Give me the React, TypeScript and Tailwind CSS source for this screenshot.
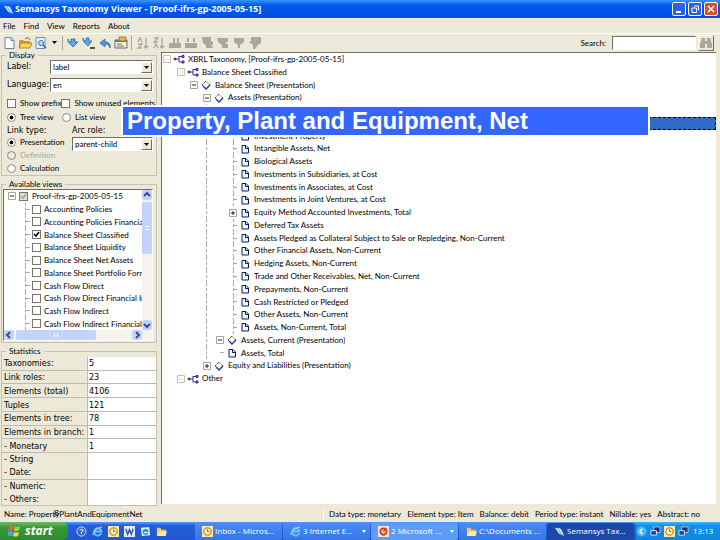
import { useState } from 'react';
import type { ReactNode } from 'react';

type NodeKind = 'network' | 'diamond' | 'page';

interface TreeNode {
  level: number;
  kind: NodeKind;
  label: string;
  toggle?: '-' | '+';
  selected?: boolean;
}

// the two rows under the callout carry no label of their own
const tree: TreeNode[] = [
  { level: 0, kind: 'network', label: 'XBRL Taxonomy, [Proof-ifrs-gp-2005-05-15]', toggle: '-' },
  { level: 1, kind: 'network', label: 'Balance Sheet Classified', toggle: '-' },
  { level: 2, kind: 'diamond', label: 'Balance Sheet (Presentation)', toggle: '-' },
  { level: 3, kind: 'diamond', label: 'Assets (Presentation)', toggle: '-' },
  { level: 4, kind: 'diamond', label: '', toggle: '-' },
  { level: 5, kind: 'page', label: '', selected: true },
  { level: 5, kind: 'page', label: 'Investment Property' },
  { level: 5, kind: 'page', label: 'Intangible Assets, Net' },
  { level: 5, kind: 'page', label: 'Biological Assets' },
  { level: 5, kind: 'page', label: 'Investments in Subsidiaries, at Cost' },
  { level: 5, kind: 'page', label: 'Investments in Associates, at Cost' },
  { level: 5, kind: 'page', label: 'Investments in Joint Ventures, at Cost' },
  { level: 5, kind: 'page', label: 'Equity Method Accounted Investments, Total', toggle: '+' },
  { level: 5, kind: 'page', label: 'Deferred Tax Assets' },
  { level: 5, kind: 'page', label: 'Assets Pledged as Collateral Subject to Sale or Repledging, Non-Current' },
  { level: 5, kind: 'page', label: 'Other Financial Assets, Non-Current' },
  { level: 5, kind: 'page', label: 'Hedging Assets, Non-Current' },
  { level: 5, kind: 'page', label: 'Trade and Other Receivables, Net, Non-Current' },
  { level: 5, kind: 'page', label: 'Prepayments, Non-Current' },
  { level: 5, kind: 'page', label: 'Cash Restricted or Pledged' },
  { level: 5, kind: 'page', label: 'Other Assets, Non-Current' },
  { level: 5, kind: 'page', label: 'Assets, Non-Current, Total' },
  { level: 4, kind: 'diamond', label: 'Assets, Current (Presentation)', toggle: '-' },
  { level: 4, kind: 'page', label: 'Assets, Total' },
  { level: 3, kind: 'diamond', label: 'Equity and Liabilities (Presentation)', toggle: '+' },
  { level: 1, kind: 'network', label: 'Other', toggle: '-' },
];

const views = [
  'Accounting Policies',
  'Accounting Policies Financia',
  'Balance Sheet Classified',
  'Balance Sheet Liquidity',
  'Balance Sheet Net Assets',
  'Balance Sheet Portfolio Form',
  'Cash Flow Direct',
  'Cash Flow Direct Financial In',
  'Cash Flow Indirect',
  'Cash Flow Indirect Financial I',
];

const stats = [
  { label: 'Taxonomies:', value: '5', line: true },
  { label: 'Link roles:', value: '23', line: true },
  { label: 'Elements (total)', value: '4106', line: true },
  { label: 'Tuples', value: '121', line: true },
  { label: 'Elements in tree:', value: '78', line: true },
  { label: 'Elements in branch:', value: '1', line: true },
  { label: '- Monetary', value: '1', line: true },
  { label: '- String', value: '', line: false },
  { label: '- Date:', value: '', line: true },
  { label: '- Numeric:', value: '', line: false },
  { label: '- Others:', value: '', line: false },
];

function NodeIcon({ kind }: { kind: NodeKind }) {
  if (kind === 'network') {
    return (
      <svg viewBox="0 0 12 10" className="h-[10px] w-3 shrink-0" fill="none" stroke="#3a2a8c">
        <path d="M1 5h5M6 2v6M6 2.500h3M6 8h3" />
        <path d="M9 1.500h2v2H9zM9 7h2v2H9z" fill="#8d7fd0" />
        <circle cx="2" cy="5" r="1" fill="#3a2a8c" />
      </svg>
    );
  }
  if (kind === 'diamond') {
    return (
      <svg viewBox="0 0 12 10" className="h-[10px] w-3 shrink-0">
        <path d="M6 1l4 4-4 4-4-4z" fill="#fffde6" stroke="#27468f" strokeDasharray="3 1" />
        <path d="M6 1l3 3" stroke="#c9b437" />
        <path d="M3 6l3 3 4-4" fill="none" stroke="#27468f" strokeWidth="1.500" />
      </svg>
    );
  }
  return (
    <svg viewBox="0 0 12 10" className="h-[10px] w-3 shrink-0">
      <path d="M3 1.500h4l2.500 2.500v5H3z" fill="#eef6ff" stroke="#0c1c58" />
      <path d="M6.500 1.500v3h3" fill="none" stroke="#0c1c58" />
    </svg>
  );
}

function Toggle({ sign, faint }: { sign: '-' | '+'; faint?: boolean }) {
  return (
    <svg viewBox="0 0 8 8" className="size-2 shrink-0" fill="none">
      <path d="M.5.5h7v7h-7z" fill="#fff" stroke={faint ? '#c4c0b0' : '#a8a496'} />
      <path d={sign === '+' ? 'M2 4h4M4 2v4' : 'M2 4h4'} stroke={faint ? '#d8d5c8' : '#222'} />
    </svg>
  );
}

const indent = ['w-px', 'w-[15px]', 'w-[28px]', 'w-[41px]'];

function TreeRow({ node }: { node: TreeNode }) {
  return (
    <li className="flex min-h-0 flex-1 items-center">
      {node.level < 4 && <span className={`${indent[node.level]} shrink-0`} />}
      {node.level >= 4 && (
        <>
          <span className="w-11 shrink-0" />
          <span
            className={`shrink-0 self-stretch border-l border-dashed border-[#aaa] ${node.level === 4 ? 'w-[10px]' : 'w-[23px]'}`}
          />
        </>
      )}
      {node.toggle ? (
        <Toggle sign={node.toggle} faint={node.level < 2} />
      ) : (
        <span
          className={`ml-1 flex w-1 shrink-0 items-center self-stretch border-dashed border-[#aaa] ${node.level === 5 ? 'border-l' : ''}`}
        >
          <span className="w-full border-t border-dashed border-[#aaa]" />
        </span>
      )}
      <span className="ml-[2px] flex shrink-0">
        <NodeIcon kind={node.kind} />
      </span>
      <span
        className={`ml-[2px] truncate self-stretch pl-px leading-[13px] ${node.selected ? 'flex-1 border border-dashed border-black bg-[#316ac5] text-white' : ''}`}
      >
        {node.label}
      </span>
    </li>
  );
}

function Check({ id, checked, muted }: { id: string; checked?: boolean; muted?: boolean }) {
  return (
    <span className="inline-grid shrink-0">
      <input
        id={id}
        type="checkbox"
        defaultChecked={checked}
        className={`peer col-start-1 row-start-1 size-[9px] appearance-none border border-[#77756b] ${muted ? 'bg-[#e4e0d4]' : 'bg-white'}`}
      />
      <svg
        viewBox="0 0 9 9"
        className={`pointer-events-none invisible col-start-1 row-start-1 size-[9px] peer-checked:visible ${muted ? 'text-[#a5a193]' : 'text-black'}`}
      >
        <path d="M2 4l2 2 3-4" fill="none" stroke="currentColor" strokeWidth="1.500" />
      </svg>
    </span>
  );
}

function Radio({ name, label, checked, disabled }: { name: string; label: string; checked?: boolean; disabled?: boolean }) {
  return (
    <label className={`flex h-[10px] items-center gap-1 ${disabled ? 'text-[#aca899]' : ''}`}>
      <input
        type="radio"
        name={name}
        defaultChecked={checked}
        disabled={disabled}
        className="size-[9px] shrink-0 appearance-none rounded-full border border-[#8c897c] bg-white checked:bg-[radial-gradient(circle,#000_35%,#fff_45%)] disabled:bg-[#ece9d8]"
      />
      {label}
    </label>
  );
}

function Combo({ id, value }: { id: string; value: string }) {
  return (
    <span className="flex h-[14px] min-w-0 flex-1 items-center border border-t-[#716f64] border-r-white border-b-white border-l-[#716f64] bg-white">
      <select id={id} className="h-3 min-w-0 flex-1 appearance-none bg-white pl-[2px] leading-3 outline-none">
        <option>{value}</option>
      </select>
      <span className="flex h-[11px] w-[11px] items-center justify-center border border-t-white border-r-[#716f64] border-b-[#716f64] border-l-white bg-[#ece9d8]">
        <svg viewBox="0 0 5 3" className="h-[3px] w-[5px]">
          <path d="M0 0h5L2.500 3z" />
        </svg>
      </span>
    </span>
  );
}

function Group({ title, children }: { title: string; children: ReactNode }) {
  return (
    <fieldset className="min-w-0 border border-[#c5c2b4]">
      <legend className="ml-1 px-[3px] leading-2">{title}</legend>
      {children}
    </fieldset>
  );
}

function ScrollButton({ label, d }: { label: string; d: string }) {
  return (
    <button aria-label={label} className="flex size-[10px] shrink-0 items-center justify-center rounded-xs bg-[#c3d3fd]">
      <svg viewBox="0 0 8 8" className="size-2" fill="none" stroke="#32508e" strokeWidth="2">
        <path d={d} />
      </svg>
    </button>
  );
}

function ToolButton({ label, children }: { label: string; children: ReactNode }) {
  return (
    <button aria-label={label} className="flex h-4 w-4 shrink-0 items-center justify-center">
      <svg viewBox="0 0 14 14" className="size-[14px]" fill="none">
        {children}
      </svg>
    </button>
  );
}

function Toolbar() {
  return (
    <div className="flex h-[18px] items-center border-t border-white pr-[6px] pl-px">
      <ToolButton label="New">
        <path d="M3 1.500h6l3 3v8H3z" fill="#fff" stroke="#6b7fa8" />
        <path d="M9 1.500v3h3" stroke="#6b7fa8" />
      </ToolButton>
      <ToolButton label="Open">
        <path d="M1 4h4l1 1h6v7H1z" fill="#d79a22" />
        <path d="M3 7h11l-2 5H1z" fill="#ffd65c" stroke="#a87514" strokeWidth=".8" />
        <path d="M7 3c2-2 4-1 5 1" stroke="#555" />
      </ToolButton>
      <ToolButton label="Preview">
        <path d="M2 1.500h9v11H2z" fill="#e7f1fb" stroke="#6b8fb8" />
        <circle cx="7" cy="7" r="2.500" fill="#b6dcf5" stroke="#3c78a8" />
        <path d="M9 9l3 3" stroke="#3c6088" strokeWidth="1.500" />
      </ToolButton>
      <svg viewBox="0 0 5 3" className="mx-[3px] h-[3px] w-[5px]">
        <path d="M0 0h5L2.500 3z" />
      </svg>
      <span className="mx-[2px] h-[14px] w-px bg-[#aca899]" />
      <ToolButton label="Load">
        <path d="M2 3c0 2 1 3 3 3V3h4v3h3l-5 5-4-4C2 6 2 5 2 3z" fill="#5ba8e6" stroke="#1d5f9f" strokeWidth=".7" />
      </ToolButton>
      <ToolButton label="Load next">
        <path d="M1 2c0 2 1 3 3 3V2h3v3h3L6 10 2 6C1 5 1 4 1 2z" fill="#5ba8e6" stroke="#1d5f9f" strokeWidth=".7" />
        <path d="M8 12h5" stroke="#222" strokeWidth="1.500" />
      </ToolButton>
      <ToolButton label="Undo">
        <path d="M12 12c1-5-2-6-5-6V3L2 7l5 4V8c3 0 4 1 5 4z" fill="#4b9be0" stroke="#1d5f9f" strokeWidth=".7" />
      </ToolButton>
      <ToolButton label="Properties">
        <path d="M1 4h12v8H1z" fill="#f5efcf" stroke="#5c6a86" />
        <path d="M1 4h12v2H1z" fill="#5877b0" />
        <path d="M5 1h7v4H5z" fill="#f0b24b" stroke="#8a6222" strokeWidth=".7" />
        <path d="M3 8h5M3 10h7" stroke="#777" />
      </ToolButton>
      <span className="mx-[2px] h-[14px] w-px bg-[#aca899]" />
      <span className="w-px" />
      <ToolButton label="Sort ascending">
        <path d="M2 6l2-4 2 4M2 8h4l-4 4h4M10 2v10M8 10l2 2 2-2" stroke="#aca899" strokeWidth="1.300" />
      </ToolButton>
      <ToolButton label="Sort descending">
        <path d="M2 2h4L2 6h4M2 12l2-4 2 4M10 2v10M8 10l2 2 2-2" stroke="#aca899" strokeWidth="1.300" />
      </ToolButton>
      <ToolButton label="Collapse">
        <path d="M1 7h12v5H1zM5 2h2v5H5zM9 2h2v5H9z" fill="#aca899" />
      </ToolButton>
      <ToolButton label="Expand">
        <path d="M1 7h12v5H1zM3 2h2v4H3zM9 2h2v4H9z" fill="#aca899" />
      </ToolButton>
      <ToolButton label="Filter elements">
        <path d="M2 1h9v4l2 1v3h-2l2 3H6V9L3 7z" fill="#aca899" />
      </ToolButton>
      <ToolButton label="Filter links">
        <path d="M1 2h11v3L9 8h3v4H6V9L2 6z" fill="#aca899" />
      </ToolButton>
      <ToolButton label="Filter roles">
        <path d="M2 2h10v4L8 9v3H6V9L2 6z" fill="#aca899" />
      </ToolButton>
      <ToolButton label="Clear filter">
        <path d="M3 1h10v6l-3 2-3 4H5V9L1 6l2-1z" fill="#aca899" />
      </ToolButton>
      <label htmlFor="search" className="ml-auto">Search:</label>
      <input
        id="search"
        className="ml-[6px] h-[14px] w-[84px] border border-t-[#716f64] border-r-white border-b-white border-l-[#716f64] bg-white px-1 outline-none"
      />
      <button
        aria-label="Find"
        className="ml-[2px] flex h-4 w-4 items-center justify-center border border-t-white border-r-[#716f64] border-b-[#716f64] border-l-white"
      >
        <svg viewBox="0 0 14 12" className="h-3 w-[14px]" fill="#aca899">
          <path d="M3 1h3v3h2V1h3l2 6v4H8V7H6v4H1V7z" />
        </svg>
      </button>
    </div>
  );
}

function DisplayGroup() {
  return (
    <Group title="Display">
      <div className="pt-px pr-[3px] pb-[2px] pl-[5px]">
        <div className="flex items-center">
          <label htmlFor="label" className="w-[43px] font-['DejaVu_Sans']">Label:</label>
          <Combo id="label" value="label" />
        </div>
        <div className="mt-1 flex items-center">
          <label htmlFor="language" className="w-[43px] font-['DejaVu_Sans']">Language:</label>
          <Combo id="language" value="en" />
        </div>
        <div className="mt-[6px] flex h-[10px] items-center whitespace-nowrap">
          <span className="flex w-[55px] items-center gap-1">
            <Check id="prefix" />
            <label htmlFor="prefix">Show prefix</label>
          </span>
          <span className="flex items-center gap-1">
            <Check id="unused" />
            <label htmlFor="unused">Show unused elements</label>
          </span>
        </div>
        <div className="mt-1 flex">
          <div className="w-[55px]">
            <Radio name="mode" label="Tree view" checked />
          </div>
          <Radio name="mode" label="List view" />
        </div>
        <div className="mt-1 flex h-[10px] items-center font-['DejaVu_Sans']">
          <span className="w-[65px]">Link type:</span>
          <label htmlFor="arcrole">Arc role:</label>
        </div>
        <div className="mt-px flex">
          <div className="flex w-[65px] flex-col gap-[3px]">
            <Radio name="link" label="Presentation" checked />
            <Radio name="link" label="Definition" disabled />
            <Radio name="link" label="Calculation" />
          </div>
          <Combo id="arcrole" value="parent-child" />
        </div>
      </div>
    </Group>
  );
}

function ViewsGroup() {
  return (
    <Group title="Available views">
      <div className="m-px mr-[3px] border border-t-[#716f64] border-r-white border-b-white border-l-[#716f64] bg-white">
        <div className="flex">
          <ul className="flex h-[140px] min-w-0 flex-1 flex-col overflow-hidden whitespace-nowrap">
            <li className="flex flex-1 items-center pl-1">
              <Toggle sign="-" />
              <span className="ml-[3px] flex">
                <Check id="root" checked muted />
              </span>
              <label htmlFor="root" className="ml-1">Proof-ifrs-gp-2005-05-15</label>
            </li>
            {views.map((view) => (
              <li key={view} className="flex flex-1 items-center pl-[21px]">
                <span className="flex w-[7px] shrink-0 items-center self-stretch border-l border-dashed border-[#aaa]">
                  <span className="w-1 border-t border-dashed border-[#aaa]" />
                </span>
                <Check id={view} checked={view === 'Balance Sheet Classified'} />
                <label htmlFor={view} className="ml-[3px]">{view}</label>
              </li>
            ))}
          </ul>
          <div className="flex w-[10px] flex-col bg-[#f4f3ee]">
            <ScrollButton label="Scroll up" d="M1 5l3-3 3 3" />
            <div className="mt-[2px] flex h-[52px] items-center justify-center rounded-xs bg-[#c3d3fd]">
              <span className="h-1 w-1 border-y border-white" />
            </div>
            <span className="flex-1" />
            <ScrollButton label="Scroll down" d="M1 3l3 3 3-3" />
          </div>
        </div>
        <div className="flex bg-[#f4f3ee] pr-[10px]">
          <ScrollButton label="Scroll left" d="M5 1L2 4l3 3" />
          <div className="ml-[2px] flex w-20 items-center justify-center rounded-xs bg-[#c3d3fd]">
            <span className="h-1 w-1 border-x border-white" />
          </div>
          <span className="flex-1" />
          <ScrollButton label="Scroll right" d="M3 1l3 3-3 3" />
        </div>
      </div>
    </Group>
  );
}

function StatsGroup() {
  return (
    <Group title="Statistics">
      <table className="mt-[2px] h-[148px] w-full border-separate border-spacing-0 font-['DejaVu_Sans'] leading-[10px]">
        <tbody>
          {stats.map((row) => (
            <tr key={row.label}>
              <th
                scope="row"
                className={`w-[85px] border-[#bdbbb0] p-0 pt-[2px] pl-[2px] text-left font-normal whitespace-nowrap ${row.line ? 'border-b' : ''}`}
              >
                {row.label}
              </th>
              <td className={`border-l border-[#bdbbb0] bg-white p-0 pt-[2px] pl-px ${row.line ? 'border-b' : ''}`}>{row.value}</td>
            </tr>
          ))}
        </tbody>
      </table>
    </Group>
  );
}

function OutlookIcon() {
  return (
    <svg viewBox="0 0 12 12" className="size-[11px] shrink-0">
      <path d="M0 0h12v12H0z" fill="#fbe9b0" />
      <circle cx="6" cy="6" r="4" fill="#fff6d8" stroke="#d18a1c" strokeWidth="1.500" />
      <path d="M6 3.500V6h2" fill="none" stroke="#8a5a12" />
    </svg>
  );
}

function IeIcon() {
  return (
    <svg viewBox="0 0 12 12" className="size-[11px] shrink-0" fill="none">
      <path d="M10 8a4 4 0 1 1 .3-2H3" stroke="#6cc4fb" strokeWidth="2" />
      <path d="M1 10C0 7 8 0 11 1.500" stroke="#b9e3fd" />
    </svg>
  );
}

function FolderIcon() {
  return (
    <svg viewBox="0 0 12 12" className="size-[11px] shrink-0">
      <path d="M1 2h4l1 2h5v7H1z" fill="#f3c45c" />
      <path d="M3 6h9l-2 5H1z" fill="#ffe9a8" />
    </svg>
  );
}

function PptIcon() {
  return (
    <svg viewBox="0 0 12 12" className="size-[11px] shrink-0">
      <path d="M0 0h12v12H0z" fill="#f5e3d8" />
      <circle cx="6" cy="6" r="3.500" fill="#f5c9a8" stroke="#c8441c" strokeWidth="2" />
      <path d="M6 6l3-4" stroke="#c8441c" strokeWidth="1.500" />
    </svg>
  );
}

function AppIcon() {
  return (
    <svg viewBox="0 0 12 12" className="size-[11px] shrink-0">
      <path d="M1 2l7 1 3 8-5-2z" fill="#8fb8ea" />
      <path d="M2 2l4 6M5 2l5 7" stroke="#fff" />
    </svg>
  );
}

function NetIcon() {
  return (
    <svg viewBox="0 0 12 12" className="size-[11px] shrink-0">
      <path d="M4 1h7v6H4z" fill="#1c2f7a" stroke="#b9c8ee" />
      <path d="M1 5h6v5H1z" fill="#27408f" stroke="#dde5fa" />
    </svg>
  );
}

function Task({ icon, label, tone, arrow }: { icon: ReactNode; label: string; tone?: string; arrow?: boolean }) {
  return (
    <button
      className={`flex h-[17px] min-w-0 flex-1 items-center gap-[2px] rounded-xs pl-[7px] text-white ${tone ?? 'bg-linear-to-b from-[#4a8cf4] to-[#3576e6]'}`}
    >
      {icon}
      <span className="whitespace-nowrap">{label}</span>
      {arrow && (
        <svg viewBox="0 0 4 3" className="mr-1 ml-auto h-[3px] w-1 shrink-0" fill="#fff">
          <path d="M0 0h4L2 3z" />
        </svg>
      )}
    </button>
  );
}

function Taskbar() {
  return (
    <footer className="flex h-[18px] items-center bg-linear-to-b from-[#5a9cf5] via-[#245edb] via-20% to-[#2258d0] font-['Open_Sans']">
      <button className="flex h-[18px] w-[68px] items-center gap-1 rounded-r-md bg-linear-to-b from-[#6cbb63] via-[#379a36] via-30% to-[#2f8a2f] pl-2 text-[12px] leading-[14px] font-bold text-white italic">
        <svg viewBox="0 0 13 12" className="h-3 w-[13px]">
          <path d="M1 2q2-2 5-1L5 5.500q-2-1-5 0z" fill="#f0593a" />
          <path d="M7 1.500q2 1 5 0l-1 4q-3 1-5 0z" fill="#8fd64c" />
          <path d="M0 6.500q2-1 5 0l-1 4.500q-3-1-4 0z" fill="#5c9af8" />
          <path d="M6 7q2 1 5 0l-1 4q-3 1-5 0z" fill="#fbd34b" />
        </svg>
        start
      </button>
      <div className="ml-2 flex w-[119px] items-center gap-[5px]">
        <svg viewBox="0 0 12 12" className="size-[11px]">
          <circle cx="6" cy="6" r="5" fill="#3c67b8" stroke="#dbe7fb" />
          <path d="M4 4.500q2-2 4 0 0 1-2 2v2" fill="none" stroke="#fff" />
        </svg>
        <IeIcon />
        <OutlookIcon />
        <svg viewBox="0 0 12 12" className="size-[11px]">
          <path d="M0 0h12v12H0z" fill="#e4ecfb" />
          <path d="M2 3l2 6 2-5 2 5 2-6" fill="none" stroke="#2a4fa8" strokeWidth="1.500" />
        </svg>
        <svg viewBox="0 0 12 12" className="size-[11px]">
          <path d="M1 2l9-1 1 9-9 1z" fill="#d8effc" />
          <path d="M8.500 7.500a2.500 2.500 0 1 1 0-2H4" fill="none" stroke="#2f86cc" strokeWidth="1.500" />
        </svg>
        <FolderIcon />
      </div>
      <div className="flex min-w-0 flex-1 gap-px">
        <Task icon={<OutlookIcon />} label="Inbox - Micros..." />
        <Task icon={<IeIcon />} label="3 Internet E..." arrow />
        <Task icon={<PptIcon />} label="2 Microsoft ..." tone="bg-[#5c9df8]" arrow />
        <Task icon={<FolderIcon />} label="C:\Documents ..." />
        <Task icon={<AppIcon />} label="Semansys Tax..." tone="bg-[#1c48a8]" />
      </div>
      <div className="ml-[2px] flex h-full w-[84px] items-center gap-[3px] bg-linear-to-b from-[#3fb6f5] via-[#1290e9] via-20% to-[#0f86de] text-white">
        <svg viewBox="0 0 12 12" className="size-[11px]">
          <circle cx="6" cy="6" r="5.500" fill="#4fb4f4" />
          <path d="M7 3L4 6l3 3" fill="none" stroke="#fff" strokeWidth="1.500" />
        </svg>
        <NetIcon />
        <OutlookIcon />
        <NetIcon />
        <span className="ml-px">13:13</span>
      </div>
    </footer>
  );
}

export default function App() {
  const [menu] = useState(['File', 'Find', 'View', 'Reports', 'About']);

  return (
    <div className="relative flex min-h-screen flex-col bg-[#ece9d8] font-['Lato','Liberation_Sans',sans-serif] text-[8px] leading-[10px] text-black">
      <header className="flex h-[18px] items-center bg-linear-to-b from-[#3b93ff] via-[#0058ee] via-30% to-[#0050e0] pl-[3px] pr-[2px]">
        <AppIcon />
        <h1 className="ml-px font-['Open_Sans'] text-[9px] font-bold text-white">
          Semansys Taxonomy Viewer - [Proof-ifrs-gp-2005-05-15]
        </h1>
        <div className="ml-auto flex gap-[2px]">
          <button aria-label="Minimize" className="size-[14px] rounded-xs border border-white bg-[#2a62e0]">
            <svg viewBox="0 0 12 12" stroke="#fff" strokeWidth="2">
              <path d="M3 9h5" />
            </svg>
          </button>
          <button aria-label="Restore" className="size-[14px] rounded-xs border border-white bg-[#2a62e0]">
            <svg viewBox="0 0 12 12" fill="none" stroke="#fff">
              <path d="M3 5h4.500v4.500H3zM5 3h4.500v4.500" />
            </svg>
          </button>
          <button aria-label="Close" className="size-[14px] rounded-xs border border-white bg-[#d8502c]">
            <svg viewBox="0 0 12 12" stroke="#fff" strokeWidth="1.500">
              <path d="M3 3l6 6M9 3L3 9" />
            </svg>
          </button>
        </div>
      </header>
      <nav className="flex h-[15px] items-center gap-2 pl-[3px]">
        {menu.map((item) => (
          <button key={item}>{item}</button>
        ))}
      </nav>
      <Toolbar />

      <div className="flex flex-1">
        <aside className="flex w-[157px] shrink-0 flex-col gap-1 pl-px">
          <DisplayGroup />
          <ViewsGroup />
          <StatsGroup />
        </aside>
        <main className="mt-px mr-1 mb-[2px] ml-1 min-w-0 flex-1 border-t border-l border-[#716f64] bg-white">
          <ul className="flex h-[332px] flex-col whitespace-nowrap">
            {tree.map((node, i) => (
              <TreeRow key={i} node={node} />
            ))}
          </ul>
        </main>
      </div>

      <div className="flex h-4 items-center pl-1">
        <span className="w-[319px] shrink-0">Name: PropertyPlantAndEquipmentNet</span>
        <div className="flex h-3 items-center gap-[6px] border-l border-white pl-[5px] whitespace-nowrap">
          <span>Data type: monetary</span>
          <span>Element type: Item</span>
          <span>Balance: debit</span>
          <span>Period type: instant</span>
          <span>Nillable: yes</span>
          <span>Abstract: no</span>
        </div>
      </div>
      <Taskbar />

      <div className="absolute top-[107px] left-[123px] h-7 w-[525px] bg-[#3366ff] pl-1 font-['Liberation_Sans'] text-[24px] leading-7 font-bold whitespace-nowrap text-white outline-2 outline-white">
        Property, Plant and Equipment, Net
      </div>
      <span className="absolute top-[508px] left-[54px] font-['Liberation_Sans'] text-[9px]">8</span>
    </div>
  );
}
